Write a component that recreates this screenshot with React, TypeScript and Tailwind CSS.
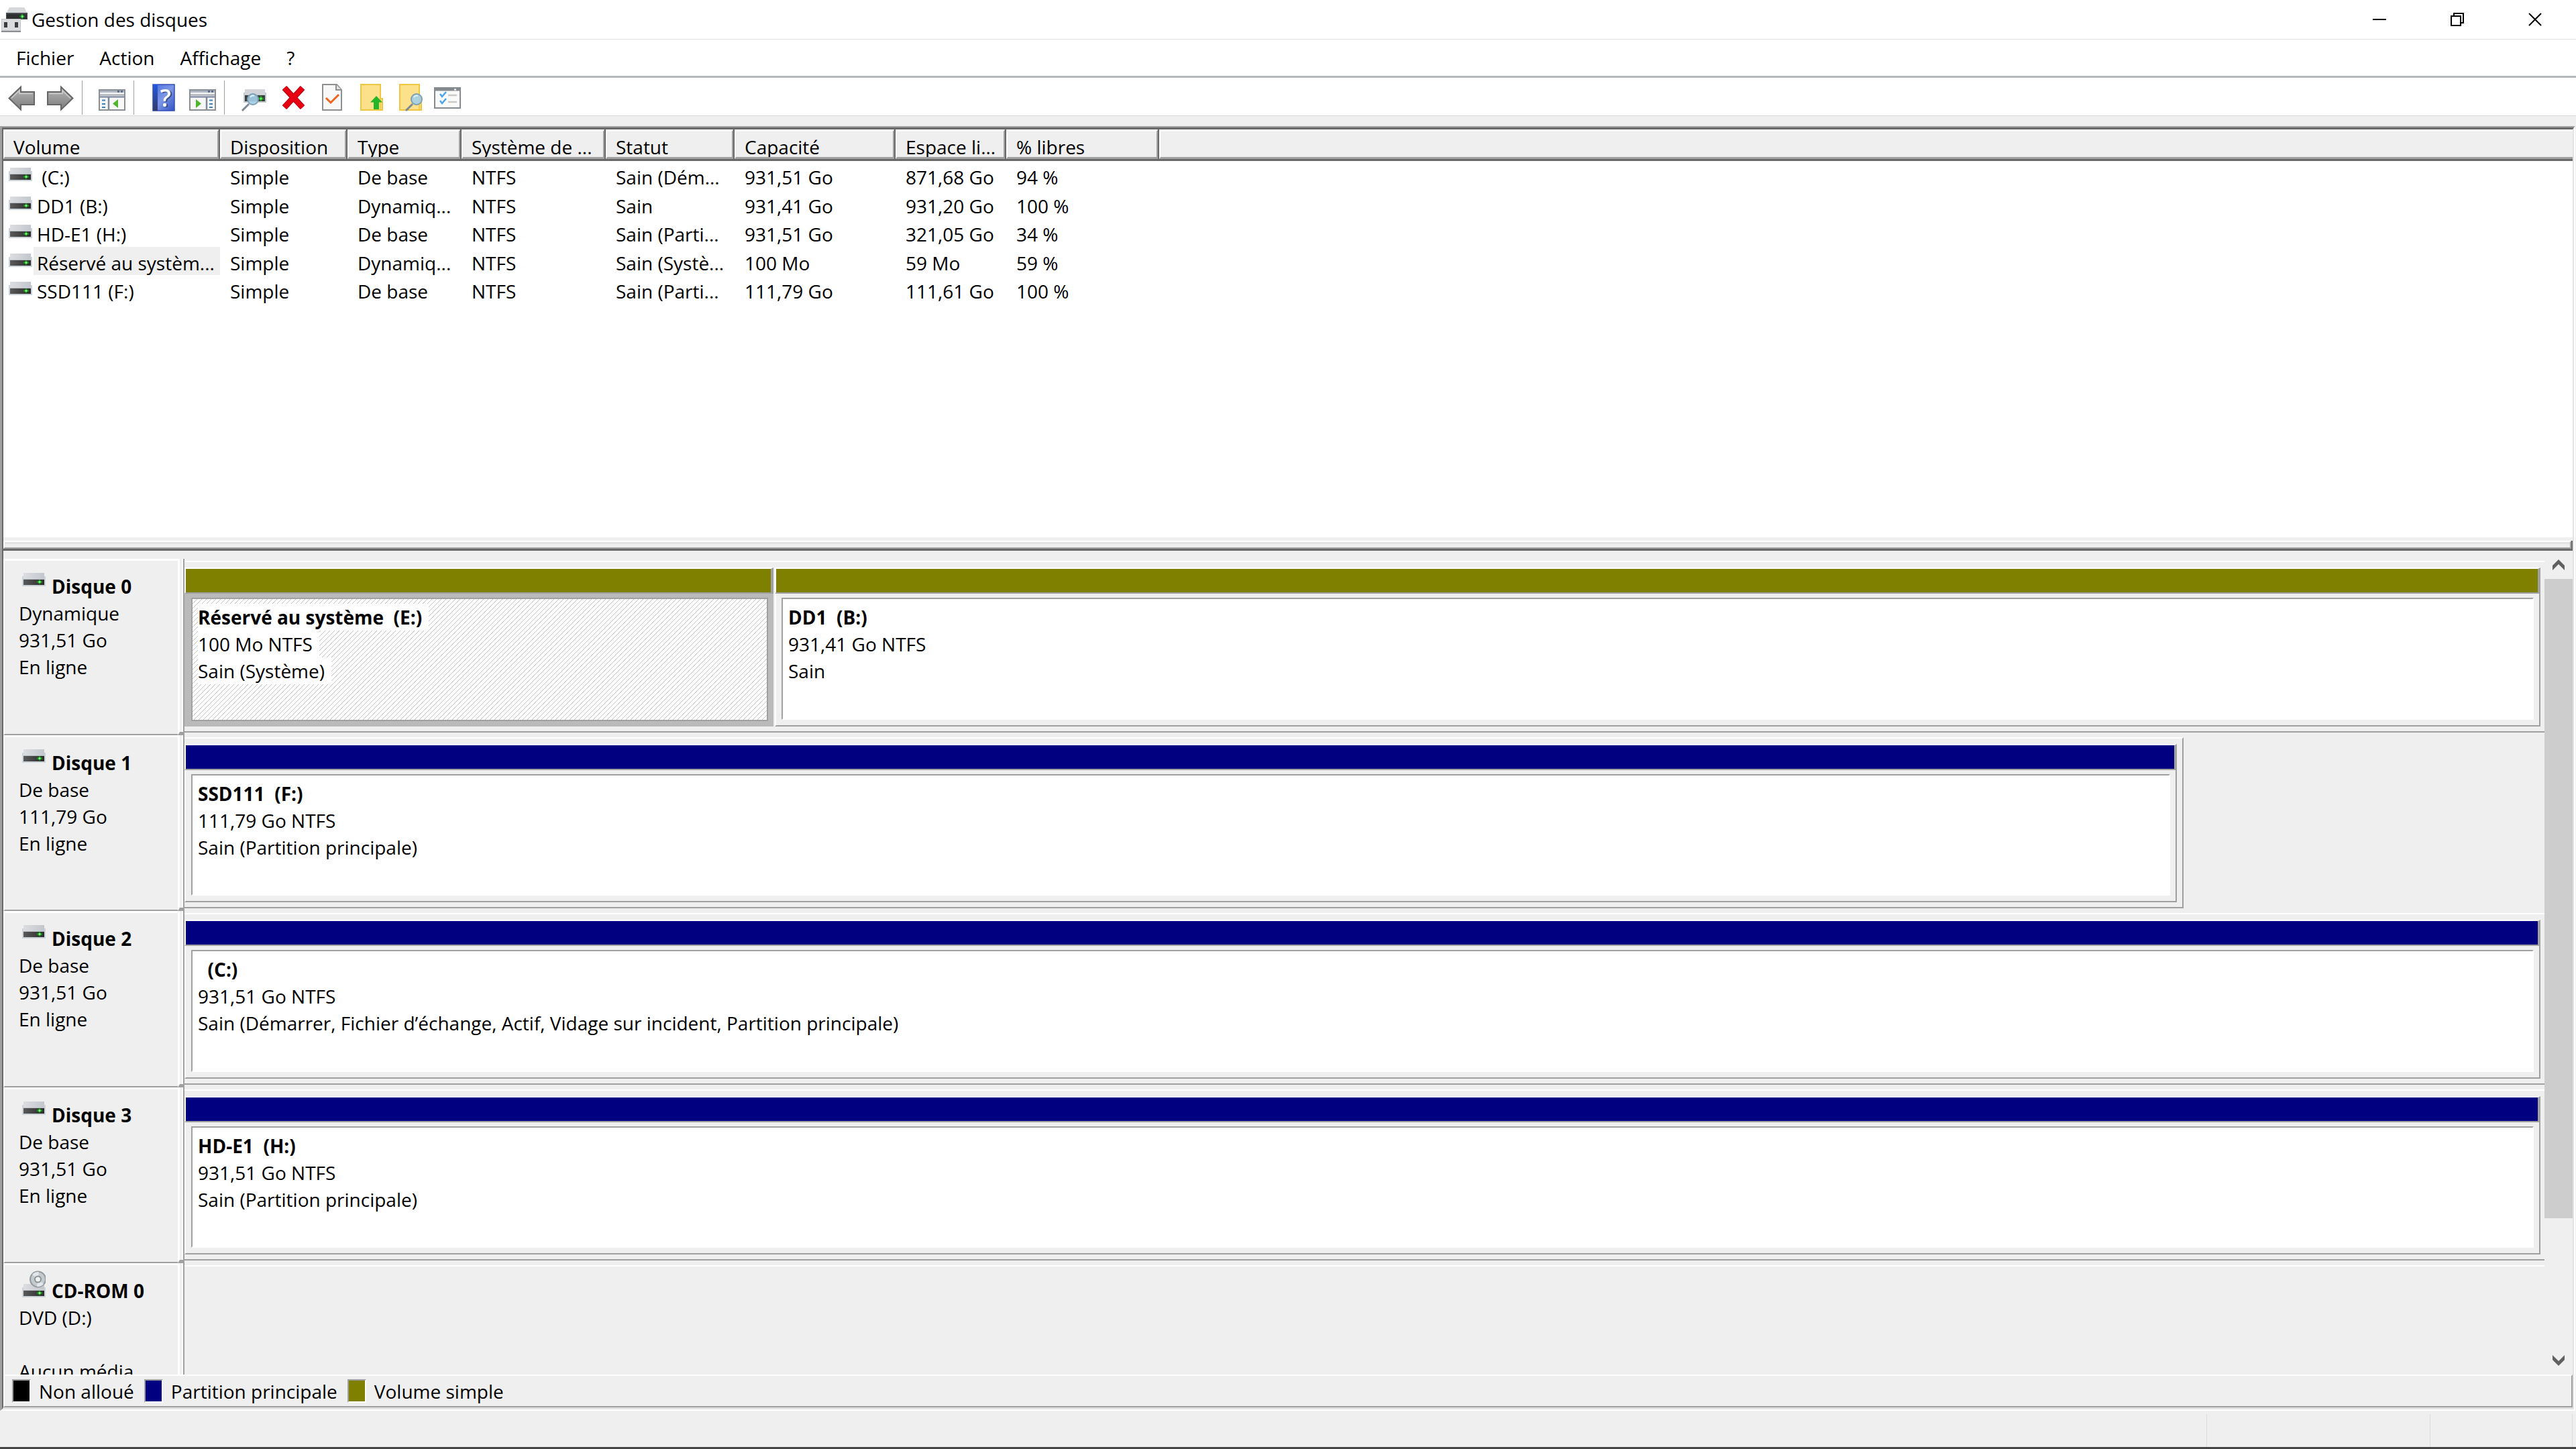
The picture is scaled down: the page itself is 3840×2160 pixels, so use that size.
import type { ReactNode } from "react";

type Volume = {
  name: string;
  layout: string;
  type: string;
  fs: string;
  status: string;
  capacity: string;
  free: string;
  percent: string;
  selected?: boolean;
};

type Partition = {
  title: string;
  size: string;
  status: string;
  bar: string;
  width: string;
  selected?: boolean;
};

type Disk = {
  name: string;
  lines: string[];
  frame: string;
  cd?: boolean;
  partitions: Partition[];
};

const OLIVE = "bg-[#808000]";
const NAVY = "bg-[#000080]";

const columns = [
  { label: "Volume", width: "w-[323px]" },
  { label: "Disposition", width: "w-[190px]" },
  { label: "Type", width: "w-[170px]" },
  { label: "Système de ...", width: "w-[215px]" },
  { label: "Statut", width: "w-[192px]" },
  { label: "Capacité", width: "w-[240px]" },
  { label: "Espace li...", width: "w-[165px]" },
  { label: "% libres", width: "w-[228px]" },
];

const volumes: Volume[] = [
  { name: " (C:)", layout: "Simple", type: "De base", fs: "NTFS", status: "Sain (Dém...", capacity: "931,51 Go", free: "871,68 Go", percent: "94 %" },
  { name: "DD1 (B:)", layout: "Simple", type: "Dynamiq...", fs: "NTFS", status: "Sain", capacity: "931,41 Go", free: "931,20 Go", percent: "100 %" },
  { name: "HD-E1 (H:)", layout: "Simple", type: "De base", fs: "NTFS", status: "Sain (Parti...", capacity: "931,51 Go", free: "321,05 Go", percent: "34 %" },
  { name: "Réservé au systèm...", layout: "Simple", type: "Dynamiq...", fs: "NTFS", status: "Sain (Systè...", capacity: "100 Mo", free: "59 Mo", percent: "59 %", selected: true },
  { name: "SSD111 (F:)", layout: "Simple", type: "De base", fs: "NTFS", status: "Sain (Parti...", capacity: "111,79 Go", free: "111,61 Go", percent: "100 %" },
];

const FULL = "flex-1 pr-[6px]";

const disks: Disk[] = [
  {
    name: "Disque 0",
    lines: ["Dynamique", "931,51 Go", "En ligne"],
    frame: FULL,
    partitions: [
      { title: "Réservé au système  (E:)", size: "100 Mo NTFS", status: "Sain (Système)", bar: OLIVE, width: "w-1/4", selected: true },
      { title: "DD1  (B:)", size: "931,41 Go NTFS", status: "Sain", bar: OLIVE, width: "flex-1" },
    ],
  },
  {
    name: "Disque 1",
    lines: ["De base", "111,79 Go", "En ligne"],
    frame: "w-[84.7%] border-r-2 border-r-[#a0a0a0] pr-2",
    partitions: [{ title: "SSD111  (F:)", size: "111,79 Go NTFS", status: "Sain (Partition principale)", bar: NAVY, width: "flex-1" }],
  },
  {
    name: "Disque 2",
    lines: ["De base", "931,51 Go", "En ligne"],
    frame: FULL,
    partitions: [
      {
        title: "  (C:)",
        size: "931,51 Go NTFS",
        status: "Sain (Démarrer, Fichier d’échange, Actif, Vidage sur incident, Partition principale)",
        bar: NAVY,
        width: "flex-1",
      },
    ],
  },
  {
    name: "Disque 3",
    lines: ["De base", "931,51 Go", "En ligne"],
    frame: FULL,
    partitions: [{ title: "HD-E1  (H:)", size: "931,51 Go NTFS", status: "Sain (Partition principale)", bar: NAVY, width: "flex-1" }],
  },
  { name: "CD-ROM 0", lines: ["DVD (D:)", "\u00a0", "Aucun média"], frame: FULL, cd: true, partitions: [] },
];

const legend = [
  { label: "Non alloué", color: "bg-black" },
  { label: "Partition principale", color: NAVY },
  { label: "Volume simple", color: OLIVE },
];

// ---------- icons ----------

function DriveIcon({ cd }: { cd?: boolean }) {
  return (
    <svg viewBox={cd ? "0 -20 35 40" : "0 0 35 20"} className={cd ? "w-[35px] h-[40px] -mt-[10px] shrink-0" : "w-[35px] h-[20px] shrink-0"}>
      <defs>
        <linearGradient id="driveTop" x1="0" x2="1">
          <stop offset="0" stopColor="#dcdde1" />
          <stop offset="1" stopColor="#c3c7cd" />
        </linearGradient>
        <linearGradient id="driveFront" x1="0" x2="1">
          <stop offset="0" stopColor="#5a5a5a" />
          <stop offset="1" stopColor="#2b2b2b" />
        </linearGradient>
      </defs>
      <path d="M2 0H33V9H2Z" fill="url(#driveTop)" />
      <path d="M0 5H2V9H33V5H35V20H0Z" fill="#ccd3d9" />
      <path d="M2 9H33V10H2Z" fill="#b4bcbf" />
      <rect x="2" y="10" width="31" height="8" fill="url(#driveFront)" />
      <path d="M26 10V17M22 13.5H30" stroke="#1f8a1f" strokeWidth="2.5" />
      <rect x="24.500" y="12" width="3" height="3" fill="#6cff6c" />
      {cd && (
        <>
          <circle cx="23.500" cy="-7" r="11.500" fill="#c3cbce" stroke="#929a9d" strokeWidth="2" />
          <path d="M23.500 -7 L15 -14 A11 11 0 0 1 25 -18Z" fill="#e2e8ea" />
          <path d="M23.500 -7 L32 0 A11 11 0 0 1 22 4Z" fill="#e2e8ea" />
          <circle cx="23.500" cy="-7" r="4.500" fill="#f0f2f2" stroke="#8b9396" strokeWidth="2" />
        </>
      )}
    </svg>
  );
}

function AppIcon() {
  return (
    <svg viewBox="0 0 40 40" className="w-10 h-10">
      <path d="M12 2H34L39 11H7Z" fill="#d6d8dc" />
      <path d="M7 10H39V20H7Z" fill="#4a4d50" />
      <path d="M8 12H38V19H8Z" fill="#2e2f31" />
      <path d="M31 12V19M27.500 15.500H34.500" stroke="#1f9a2a" strokeWidth="2.500" />
      <rect x="30" y="14" width="2.500" height="3" fill="#6cff6c" />
      <path d="M0 19H29V39H0Z" fill="#c3c5c9" />
      <path d="M1 20H28V36H1Z" fill="#dadbdf" />
      <path d="M0 38H29" stroke="#8b8d90" strokeWidth="2" />
      <rect x="4" y="24" width="5" height="8" fill="#3a3c3e" />
      <rect x="20" y="24" width="5" height="8" fill="#3a3c3e" />
    </svg>
  );
}

function Svg({ children }: { children: ReactNode }) {
  return (
    <svg viewBox="0 0 40 40" className="w-10 h-10 overflow-visible">
      {children}
    </svg>
  );
}

function ArrowIcon({ right }: { right?: boolean }) {
  return (
    <Svg>
      <defs>
        <linearGradient id="arrow" x1="0" x2="0" y1="0" y2="1">
          <stop offset="0" stopColor="#b5b5b5" />
          <stop offset="1" stopColor="#7d7d7d" />
        </linearGradient>
      </defs>
      <g transform={right ? "matrix(-1 0 0 1 40 0)" : undefined}>
        <path d="M1.500 21.500L19 4.500V12H39V31H19V38.500Z" fill="url(#arrow)" stroke="#666" strokeWidth="2" />
        <path d="M5 21.500L17 10V14.500H36.500" fill="none" stroke="#cfcfcf" strokeWidth="1.500" />
      </g>
    </Svg>
  );
}

function PaneIcon({ right }: { right?: boolean }) {
  const dash = right ? "M30 24.500H35M30 30H35M30 35H35" : "M5 24.500H10M5 30H10M5 35H10";
  return (
    <Svg>
      <rect x="1" y="9" width="38" height="30" fill="#f7f7f7" stroke="#8a8f94" strokeWidth="2" />
      <path d="M2 11.500H38" stroke="#aeb6c4" strokeWidth="3" />
      <path d="M28 11.500H31M33 11.500H36" stroke="#5d6b8a" strokeWidth="3" />
      <path d="M2 16.500H38" stroke="#b9bdc4" strokeWidth="3" />
      <path d="M2 19.500H38" stroke="#75819a" strokeWidth="2" />
      <path d={right ? "M26 20V38" : "M15 20V38"} stroke="#7d8899" strokeWidth="2.500" />
      <path d={dash} stroke="#3c7fc0" strokeWidth="2" />
      <path d={right ? "M10 23L18 29.500L10 36Z" : "M29 23L21 29.500L29 36Z"} fill="#4fb52c" />
    </Svg>
  );
}

function HelpIcon() {
  return (
    <Svg>
      <defs>
        <linearGradient id="book" x1="0" x2="1" y1="0" y2="1">
          <stop offset="0" stopColor="#4a6fe0" />
          <stop offset="0.500" stopColor="#7d97e6" />
          <stop offset="1" stopColor="#2f50c4" />
        </linearGradient>
        <linearGradient id="spine" x1="0" x2="0" y1="0" y2="1">
          <stop offset="0" stopColor="#2458e0" />
          <stop offset="1" stopColor="#33396b" />
        </linearGradient>
      </defs>
      <rect x="4" y="1" width="32" height="39" fill="url(#book)" stroke="#2f4fb8" strokeWidth="1.500" />
      <rect x="4" y="1" width="7" height="39" fill="url(#spine)" />
      <text x="23" y="34" textAnchor="middle" className="text-[36px] font-semibold drop-shadow-[2px_1px_0_#3a4a86]" fill="#fff">
        ?
      </text>
    </Svg>
  );
}

function Magnifier({ cx, cy }: { cx: number; cy: number }) {
  return (
    <g transform={`translate(${cx} ${cy})`}>
      <path d="M-6 7L-16 17" stroke="#7b8a94" strokeWidth="3" />
      <circle r="8" fill="#a5cfe8" fillOpacity="0.900" stroke="#7fa0b3" strokeWidth="2" />
      <path d="M-4 -3A5 5 0 0 1 2 -5" stroke="#dff1fb" strokeWidth="2" fill="none" />
    </g>
  );
}

function RescanIcon() {
  return (
    <Svg>
      <path d="M6 8H36V17H6Z" fill="#d2d4d9" />
      <path d="M4 13H6V16H36V13H38V28H4Z" fill="#c4c9ce" />
      <rect x="6" y="17" width="30" height="9" fill="#3b3d3f" />
      <path d="M30 18V26M26 22H34" stroke="#1c9a1c" strokeWidth="2.500" />
      <rect x="28.500" y="20.500" width="3" height="3" fill="#5dff5d" />
      <Magnifier cx={18} cy={23} />
    </Svg>
  );
}

function DeleteIcon() {
  return (
    <Svg>
      <path d="M7 6L34 35M34 6L7 35" stroke="#a8000c" strokeWidth="9" />
      <path d="M7 6L34 35M34 6L7 35" stroke="#e60012" strokeWidth="7" />
    </Svg>
  );
}

function CheckPageIcon() {
  return (
    <Svg>
      <path d="M6 1H27L34 9V39H6Z" fill="#f8f8f8" stroke="#8d8f91" strokeWidth="2" />
      <path d="M26 1V9H34" fill="#e3e3e3" stroke="#8d8f91" strokeWidth="2" />
      <path d="M11 21L18 28L30 16" fill="none" stroke="#f0641e" strokeWidth="3" />
    </Svg>
  );
}

function FolderShape() {
  return (
    <>
      <path d="M5 1H34V22H37V39H5Z" fill="#fce08a" stroke="#efc63f" strokeWidth="2" />
      <path d="M34 22V39" stroke="#efc63f" strokeWidth="1.500" />
    </>
  );
}

function FolderUpIcon() {
  return (
    <Svg>
      <FolderShape />
      <path d="M28 18L37 27.500H32V38H24V27.500H19Z" fill="#25b52b" />
    </Svg>
  );
}

function FolderFindIcon() {
  return (
    <Svg>
      <FolderShape />
      <Magnifier cx={30} cy={23} />
    </Svg>
  );
}

function OptionsIcon() {
  return (
    <Svg>
      <rect x="-1" y="6" width="38" height="30" fill="#fafafa" stroke="#858a8e" strokeWidth="2" />
      <path d="M-1 8H37" stroke="#858a8e" strokeWidth="5" />
      <path d="M28 8.500H31" stroke="#fff" strokeWidth="2" />
      <path d="M7 15L10 19L16 12M7 25L10 29L16 22" fill="none" stroke="#48a5ec" strokeWidth="2.500" />
      <path d="M19 17H32M19 27H32" stroke="#c9c9c9" strokeWidth="2.500" />
    </Svg>
  );
}

// ---------- parts ----------

function ToolButton({ label, children }: { label: string; children: ReactNode }) {
  return (
    <button aria-label={label} className="w-[58px] h-full flex items-center justify-center">
      {children}
    </button>
  );
}

function Separator() {
  return <div className="w-[19px] h-[51px] pl-[3px]"><div className="w-px h-full bg-[#a0a0a0]" /></div>;
}

function TitleBar() {
  return (
    <header className="h-[59px] flex items-center border-b border-[#e0e0e0] bg-white pl-[2px]">
      <AppIcon />
      <h1 className="flex-1 pl-[5px] leading-[40px]">Gestion des disques</h1>
      <div className="flex self-stretch pr-[3px]">
        <button aria-label="Réduire" className="w-[116px] flex items-center justify-center">
          <svg viewBox="0 0 20 20" className="w-5 h-5"><path d="M0 10H20" stroke="#000" strokeWidth="2" /></svg>
        </button>
        <button aria-label="Restaurer" className="w-[116px] flex items-center justify-center">
          <svg viewBox="0 0 20 20" className="w-5 h-5">
            <path d="M1 5H15V19H1ZM5 5V1H19V15H15" fill="none" stroke="#000" strokeWidth="2" />
          </svg>
        </button>
        <button aria-label="Fermer" className="w-[116px] flex items-center justify-center">
          <svg viewBox="0 0 20 20" className="w-5 h-5"><path d="M1 1L19 19M19 1L1 19" stroke="#000" strokeWidth="2" /></svg>
        </button>
      </div>
    </header>
  );
}

function VolumeTable() {
  return (
    <div className="h-[608px] bg-white overflow-hidden">
      <table className="w-full table-fixed border-separate border-spacing-0 text-left">
        <thead>
          <tr className="h-[47px]">
            {columns.map((c) => (
              <th key={c.label} className={`${c.width} p-0 font-normal border-r-2 border-b-[3px] border-[#696969]`}>
                <div className="h-[44px] overflow-hidden bg-[#efefef] border-t-[3px] border-l-2 border-r-2 border-b-[3px] border-t-white border-l-white border-r-[#a0a0a0] border-b-[#a0a0a0] pl-[13px] pt-2 leading-[30px] whitespace-nowrap">
                  {c.label}
                </div>
              </th>
            ))}
            <th aria-label="Vide" className="p-0 border-b-[3px] border-[#696969]">
              <div className="h-[44px] bg-[#efefef] border-t-[3px] border-l-2 border-b-[3px] border-t-white border-l-white border-b-[#a0a0a0]" />
            </th>
          </tr>
        </thead>
        <tbody>
          {volumes.map((v) => (
            <tr key={v.name} className="h-[43px] even:h-[42px] align-top leading-[34px] whitespace-nowrap">
              <td className="p-0">
                <div className="flex items-start gap-[2px] pl-2">
                  <div className="pt-[10px]"><DriveIcon /></div>
                  <span className={`flex-1 pt-[7px] pb-px pl-[5px] whitespace-pre ${v.selected ? "bg-[#efefef]" : ""}`}>{v.name}</span>
                </div>
              </td>
              {[v.layout, v.type, v.fs, v.status, v.capacity, v.free, v.percent].map((text, i) => (
                <td key={i} className="p-0 pt-[7px] pl-[15px]">{text}</td>
              ))}
              <td className="p-0" />
            </tr>
          ))}
        </tbody>
      </table>
    </div>
  );
}

function PartitionBox({ p }: { p: Partition }) {
  const outer = p.selected
    ? "bg-[#bababa] pl-[10px] pr-2 pt-[6px] pb-2"
    : "border-l-2 border-r-2 border-b-2 border-l-white border-r-[#a0a0a0] border-b-[#a0a0a0] pl-2 pr-2 pt-[6px] pb-2";
  const inner = p.selected
    ? "border-2 border-[#a0a0a0] bg-[linear-gradient(135deg,#ffffff_43%,#c2c2c2_43%_57%,#ffffff_57%)] bg-[length:7px_7px]"
    : "bg-white border-2 border-t-[#a0a0a0] border-l-[#a0a0a0] border-r-white border-b-white";
  const mark = p.selected ? "bg-white pr-[10px]" : "";
  return (
    <section className={`${p.width} flex flex-col`}>
      <div className={`h-[39px] ${p.bar} border-t-2 border-l-2 border-b-2 border-r-4 border-t-white border-l-white border-b-[#a0a0a0] border-r-[#a0a0a0]`} />
      <div className={`flex-1 flex ${outer}`}>
        <div className={`flex-1 flex flex-col items-start pl-2 pt-[7px] leading-[40px] whitespace-pre ${inner}`}>
          <h3 className={`font-bold ${mark}`}>{p.title}</h3>
          <p className={mark}>{p.size}</p>
          <p className={mark}>{p.status}</p>
        </div>
      </div>
    </section>
  );
}

function DiskRow({ disk }: { disk: Disk }) {
  return (
    <article className="flex">
      <div className="w-[260px] shrink-0 border-l-2 border-t-[3px] border-b-2 border-l-white border-t-white border-b-[#a0a0a0] pl-[21px] pt-[18px] leading-[40px] whitespace-nowrap">
        <div className="flex items-start gap-[9px] pl-[5px]">
          <DriveIcon cd={disk.cd} />
          <h2 className="font-bold">{disk.name}</h2>
        </div>
        {disk.lines.map((line, i) => (
          <p key={i}>{line}</p>
        ))}
      </div>
      <div className="w-[10px] shrink-0 flex border-l-[3px] border-b-[5px] border-l-white border-b-[#a0a0a0] pl-[3px]">
        <div className="w-1 shrink-0 border-l-2 border-r-2 border-l-white border-r-[#a0a0a0]" />
      </div>
      <div className="flex-1 flex">
        <div className={`${disk.frame} flex gap-[2px] mt-[3px] mb-1 pt-2 pb-[7px] border-t-2 border-b-2 border-t-white border-b-[#a0a0a0]`}>
          {disk.partitions.map((p) => (
            <PartitionBox key={p.title} p={p} />
          ))}
        </div>
      </div>
    </article>
  );
}

function ScrollBar() {
  return (
    <div className="w-[42px] flex flex-col bg-[#efefef]">
      <button aria-label="Défiler vers le haut" className="h-[42px] flex items-center justify-center">
        <svg viewBox="0 0 18 16" className="w-[18px] h-4"><path d="M0 9L9 0L18 9V16L9 7L0 16Z" fill="#606060" /></svg>
      </button>
      <div className="flex-1">
        <div className="h-5/6 bg-[#cdcdcd]" />
      </div>
      <button aria-label="Défiler vers le bas" className="h-[42px] flex items-center justify-center">
        <svg viewBox="0 0 18 16" className="w-[18px] h-4"><path d="M0 0L9 9L18 0V7L9 16L0 7Z" fill="#606060" /></svg>
      </button>
    </div>
  );
}

export default function App() {
  return (
    <div className="h-screen w-full flex flex-col overflow-hidden bg-[#efefef] text-black text-[28px] font-['Open_Sans','Noto_Sans',sans-serif]">
      <TitleBar />

      <nav className="h-[57px] flex items-center bg-white border-b-[3px] border-[#b4b9bb] pl-[5px]">
        {["Fichier", "Action", "Affichage", "?"].map((item) => (
          <button key={item} className="px-[19px] leading-[40px]">{item}</button>
        ))}
      </nav>

      <div className="h-[57px] flex items-center bg-white border-b border-[#d9d9d9] pl-[3px] pt-[2px]">
        <ToolButton label="Précédent"><ArrowIcon /></ToolButton>
        <ToolButton label="Suivant"><ArrowIcon right /></ToolButton>
        <Separator />
        <ToolButton label="Arborescence"><PaneIcon /></ToolButton>
        <Separator />
        <ToolButton label="Aide"><HelpIcon /></ToolButton>
        <ToolButton label="Volet Actions"><PaneIcon right /></ToolButton>
        <Separator />
        <ToolButton label="Analyser les disques"><RescanIcon /></ToolButton>
        <ToolButton label="Supprimer"><DeleteIcon /></ToolButton>
        <ToolButton label="Propriétés"><CheckPageIcon /></ToolButton>
        <ToolButton label="Dossier parent"><FolderUpIcon /></ToolButton>
        <ToolButton label="Explorer"><FolderFindIcon /></ToolButton>
        <ToolButton label="Options"><OptionsIcon /></ToolButton>
      </div>

      {/* sunken client frame: list on top, disks below */}
      <main className="flex-1 min-h-0 mt-[15px] mr-px flex flex-col border-t-2 border-l-[3px] border-r-2 border-b-2 border-t-[#a0a0a0] border-l-[#a0a0a0] border-r-white border-b-white">
        <div className="flex-1 min-h-0 flex flex-col border-t-[3px] border-l-2 border-r-2 border-b-[3px] border-t-[#696969] border-l-[#696969] border-r-[#e3e3e3] border-b-[#e3e3e3]">
          <VolumeTable />

          <div className="h-5 pt-[5px] bg-[#efefef]">
            <div className="h-[15px] border-b-[3px] border-r-2 border-[#696969]">
              <div className="h-3 border-2 border-t-white border-l-white border-r-[#a0a0a0] border-b-[#a0a0a0]">
                <div className="h-[3px] bg-[#e3e3e3]" />
              </div>
            </div>
          </div>

          <div className="flex-1 min-h-0 flex">
            <div className="flex-1 overflow-hidden pt-3">
              <div className="grid grid-rows-[263px_262px_263px_262px_263px]">
                {disks.map((d) => (
                  <DiskRow key={d.name} disk={d} />
                ))}
              </div>
            </div>
            <ScrollBar />
          </div>

          <footer className="h-[49px] flex items-center gap-[15px] pl-[11px] border-2 border-t-white border-l-white border-r-[#a0a0a0] border-b-[#a0a0a0]">
            {legend.map((l) => (
              <div key={l.label} className="flex items-center gap-3">
                <div className={`w-[28px] h-[35px] ${l.color} border-2 border-t-[#a0a0a0] border-l-[#a0a0a0] border-r-white border-b-white`} />
                <span className="leading-[40px]">{l.label}</span>
              </div>
            ))}
          </footer>
        </div>
      </main>

      <div className="h-[57px] flex justify-end bg-[#efefef] border-b-[3px] border-[#444444] pt-[5px] pr-[5px]">
        <div className="w-[333px] border-l border-[#dcdcdc]" />
        <div className="w-[213px] border-l border-r border-[#dcdcdc]" />
      </div>
    </div>
  );
}
